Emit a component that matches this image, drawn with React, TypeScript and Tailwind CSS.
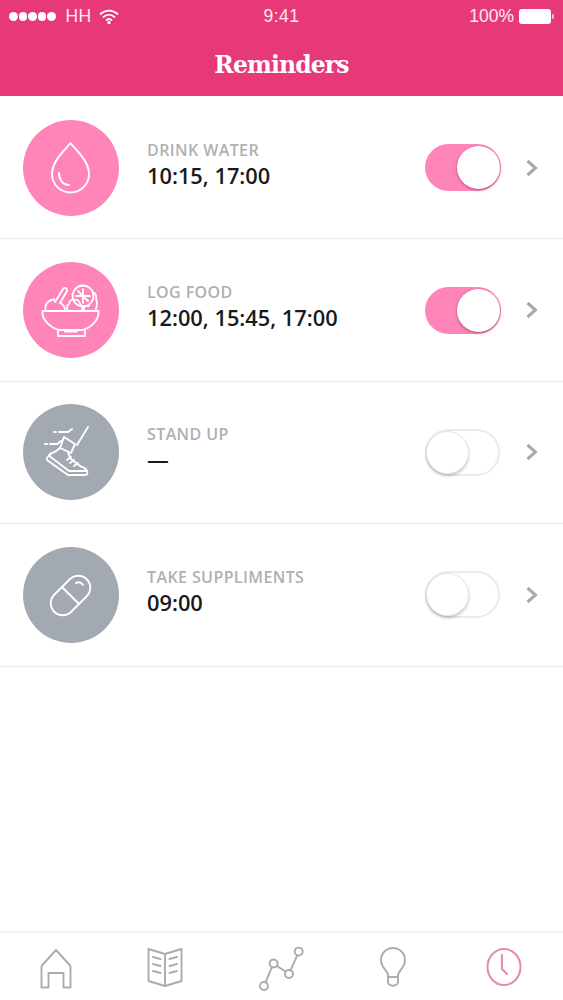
import { ReactNode } from 'react';

function Drop() {
  return (
    <svg width="96" height="96" viewBox="0 0 96 96" fill="none" stroke="white" strokeWidth="1.9" strokeLinecap="round" strokeLinejoin="round">
      <path d="M47.500 23C42 30 29 41 29 54a18.500 18.500 0 0 0 37 0C66 41 53 30 47.500 23Z" />
      <path d="M36 53c0 7 4 12 10 12" />
    </svg>
  );
}

function Bowl() {
  return (
    <svg width="96" height="96" viewBox="0 0 96 96" fill="none" stroke="white" strokeWidth="1.8" strokeLinecap="round" strokeLinejoin="round">
      <path d="M19.500 49h56c1 9-8 17-16 19H36c-8-2-17.500-10-16.500-19Z" />
      <path d="M35 68v6h27v-6M42 69.500h12" />
      <path d="M23 49c-2-5 1-10 6-11l2-1 1 3 8-13c2-2 4-1 4 2l-7 12c3 1 5 4 5 8" />
      <circle cx="60" cy="34" r="10.500" />
      <path d="M60 27v14M53 34h14M55 29l10 10" />
      <path d="M45 49c-2-3-1-6 1-7 0-3 3-5 5-4 3-1 6 1 6 4 2 1 3 4 2 7" />
      <path d="M70 30c3 2 4 4 3 7 2 4 1 8-1 12" />
      <path d="M61 49v-5h5" />
    </svg>
  );
}

function Shoe() {
  return (
    <svg width="96" height="96" viewBox="0 0 96 96" fill="none" stroke="white" strokeWidth="1.9" strokeLinecap="round" strokeLinejoin="round">
      <path d="M65 23 54 41" />
      <path d="M31 28h2M36 28h9l4-3M22 40h2M27 40h7l4-3" />
      <path d="M41 33l11 7-4 9-11-5 4-11Z" />
      <path d="M37 44c-2 2-7 5-10 6l-3 4v2l21 15h17c2 0 3-1 2-4-1-3-4-4-7-5l-9-7-3-6" />
      <path d="M27 50c-1 2 0 3 2 4l17 13h18" />
      <path d="M44 56l4-3M47 59l4-3M51 62l4-3" />
    </svg>
  );
}

function Pill() {
  return (
    <svg width="96" height="96" viewBox="0 0 96 96" fill="none" stroke="white" strokeWidth="1.9" strokeLinecap="round" strokeLinejoin="round">
      <rect x="24.500" y="36.500" width="46" height="24" rx="12" transform="rotate(-45 47.500 48.500)" />
      <path d="M39 40l17 17" />
      <path d="M53 36c2-1 5-1 7 2" />
    </svg>
  );
}

function Toggle({ on }: { on: boolean }) {
  if (on) {
    return (
      <div className="h-[47px] w-[76px] rounded-full bg-[#ff85b8] flex items-center justify-end pr-[1.500px]">
        <div className="h-[43px] w-[43px] rounded-full bg-white shadow-[0_1px_3px_rgba(120,40,80,0.6)]" />
      </div>
    );
  }
  return (
    <div className="h-[47px] w-[75px] rounded-full bg-white border-2 border-[#eaeaec] flex items-center">
      <div className="-ml-[1px] h-[43px] w-[43px] rounded-full bg-white border border-[#e6e6e6] shadow-[0_2px_3px_rgba(0,0,0,0.22)]" />
    </div>
  );
}

function Row({ icon, label, time, on }: { icon: ReactNode; label: string; time: string; on: boolean }) {
  return (
    <div className="h-[142.400px] shrink-0 border-b border-[#ebebee] flex items-center pl-[23px] pr-6">
      <div className={`h-24 w-24 rounded-full shrink-0 ${on ? 'bg-[#ff85b8]' : 'bg-[#a3a9b0]'}`}>{icon}</div>
      <div className="ml-[28px] flex-1 -mt-[5px]">
        <div className="text-[16px] leading-5 font-semibold tracking-[0.4px] text-[#adb0b5]">{label}</div>
        <div className="text-[21.800px] leading-[31px] font-semibold text-[#1a1a1a]">{time}</div>
      </div>
      <Toggle on={on} />
      <svg className={on ? 'ml-6' : 'ml-[25px]'} width="14" height="18" viewBox="0 0 14 18" fill="none" stroke="#a9a9ac" strokeWidth="3">
        <path d="M2.500 2l8 7-8 7" />
      </svg>
    </div>
  );
}

function TabIcon({ children, active }: { children: ReactNode; active?: boolean }) {
  return (
    <svg width="48" height="48" viewBox="0 0 48 48" fill="none" stroke={active ? '#e98ab0' : '#a9abae'} strokeWidth="1.900" strokeLinecap="round" strokeLinejoin="round">
      {children}
    </svg>
  );
}

export default function App() {
  return (
    <div className="h-[1000px] w-[563px] bg-white flex flex-col overflow-hidden font-['Open_Sans',sans-serif]">
      <div className="h-[96px] shrink-0 bg-[#e73877] text-white">
        <div className="h-[32px] flex items-center justify-between pl-[9px] pr-[9px] pt-[1px] text-[17.500px] text-white/90 font-['Liberation_Sans',sans-serif]">
          <div className="flex items-center w-[150px]">
            <div className="flex gap-[1px]">
              <span className="h-[8.500px] w-[8.500px] rounded-full bg-white" />
              <span className="h-[8.500px] w-[8.500px] rounded-full bg-white" />
              <span className="h-[8.500px] w-[8.500px] rounded-full bg-white" />
              <span className="h-[8.500px] w-[8.500px] rounded-full bg-white" />
              <span className="h-[8.500px] w-[8.500px] rounded-full bg-white" />
            </div>
            <span className="ml-[10px] tracking-[0.3px]">HH</span>
            <svg className="ml-[8px]" width="20" height="15" viewBox="0 0 20 15" fill="none" stroke="white" strokeWidth="1.700" strokeLinecap="round">
              <path d="M1.500 5c5-4.500 12-4.500 17 0" />
              <path d="M4.500 8c3.300-2.800 7.700-2.800 11 0" />
              <path d="M7.500 11c1.500-1.200 3.500-1.200 5 0" />
              <circle cx="10" cy="13.500" r="0.800" fill="white" />
            </svg>
          </div>
          <span className="tracking-[0.5px]">9:41</span>
          <div className="flex items-center justify-end w-[150px]">
            <span>100%</span>
            <div className="ml-[5px] h-[15px] w-[32px] rounded-[3px] bg-white" />
            <div className="ml-[1px] h-[5px] w-[2px] rounded-r-sm bg-white/70" />
          </div>
        </div>
        <div className="mt-[3px] text-center text-[23.500px] leading-[60px] font-bold font-['DejaVu_Serif',serif] tracking-[-0.900px]">Reminders</div>
      </div>

      <div className="flex-1 mt-px">
        <Row icon={<Drop />} label="DRINK WATER" time="10:15, 17:00" on />
        <Row icon={<Bowl />} label="LOG FOOD" time="12:00, 15:45, 17:00" on />
        <Row icon={<Shoe />} label="STAND UP" time="—" on={false} />
        <Row icon={<Pill />} label="TAKE SUPPLIMENTS" time="09:00" on={false} />
      </div>

      <div className="h-[69px] shrink-0 border-t-2 border-[#f4f4f5] flex items-center justify-between pl-[32px] pr-[35px] pt-[3px]">
        <TabIcon>
          <path d="M9.500 43.500V22L24 6l14.500 16v21.500h-7V29h-15v14.500h-7Z" />
        </TabIcon>
        <TabIcon>
          <path d="M21 10 4.500 5v32L21 42l16.500-5V5L21 10ZM21 10v32" />
          <path d="M9 13l7.500 2M9 20l7.500 2M9 27l7.500 2M33 13l-7.500 2M33 20l-7.500 2M33 27l-7.500 2" />
        </TabIcon>
        <TabIcon>
          <circle cx="8" cy="42" r="4" />
          <circle cx="17.600" cy="19.500" r="4" />
          <circle cx="33" cy="30" r="4" />
          <circle cx="42.700" cy="7.600" r="4" />
          <path d="M9.500 38.300 16 23.200M21 22l8.500 5.500M34.500 26.300l6.700-15" />
        </TabIcon>
        <TabIcon>
          <path d="M20 33v-2c0-4-7-7-7-15a12 12 0 0 1 24 0c0 8-7 11-7 15v2H20Z" />
          <path d="M20 33v5c0 5 10 5 10 0v-5" />
        </TabIcon>
        <TabIcon active>
          <ellipse cx="24" cy="23" rx="16.500" ry="18" strokeWidth="2.100" />
          <path d="M22 11v14l5 5" strokeWidth="2.100" />
        </TabIcon>
      </div>
    </div>
  );
}
